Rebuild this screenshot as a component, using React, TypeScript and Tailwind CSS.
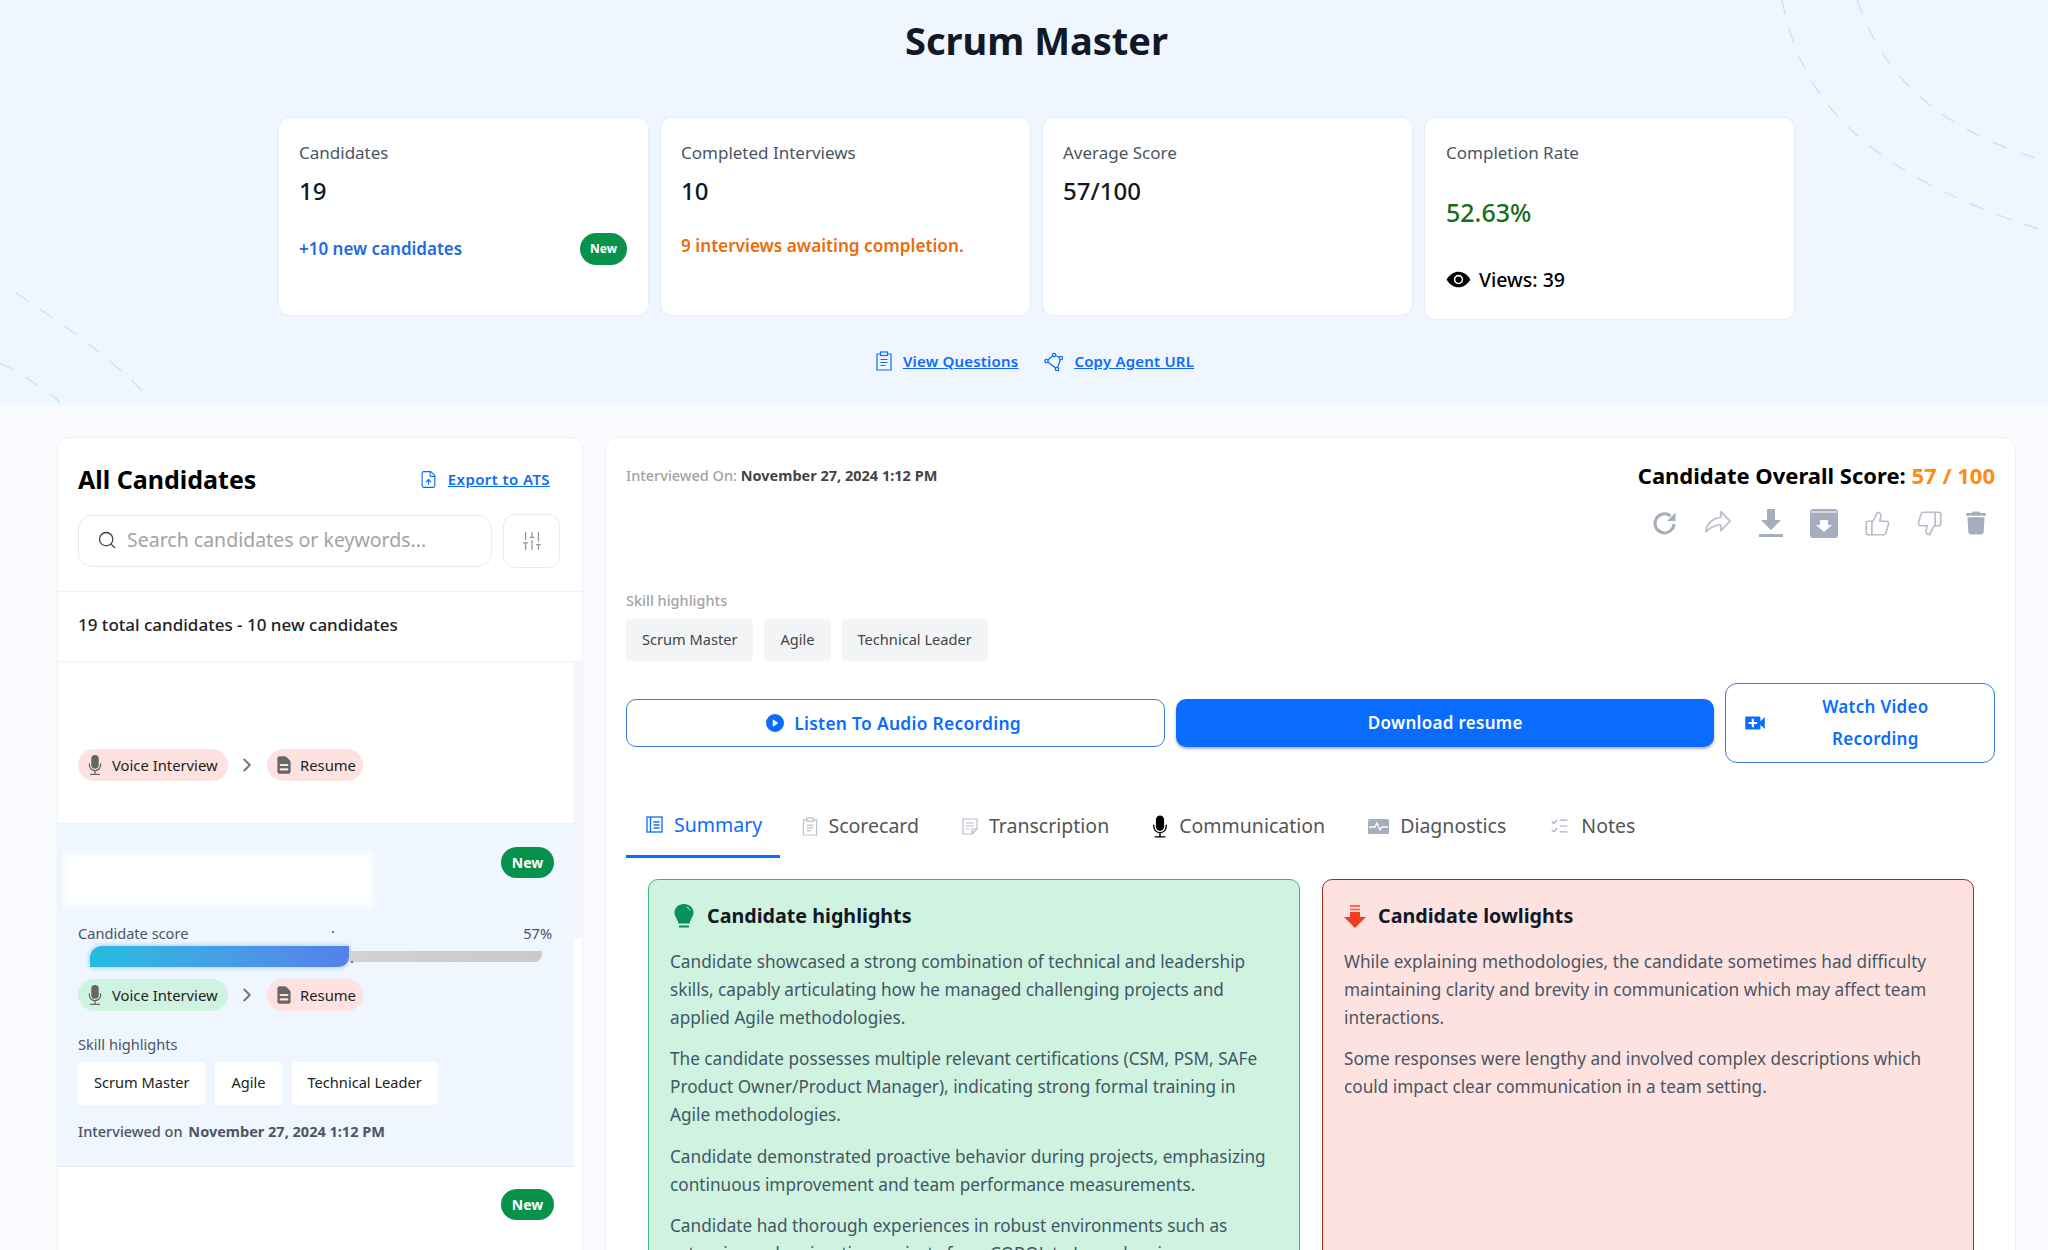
import { ChevronRight, FileUp, ListChecks, Search, SlidersVertical, ThumbsDown, ThumbsUp } from 'lucide-react';
import { BsMicFill, BsPlayCircleFill } from 'react-icons/bs';
import { FaTrash } from 'react-icons/fa';
import { HiDocumentText } from 'react-icons/hi';
import { IoEye } from 'react-icons/io5';
import { MdVideoCall } from 'react-icons/md';
import { PiShareFat } from 'react-icons/pi';

const stats = [
	{ label: 'Candidates', value: '19' },
	{ label: 'Completed Interviews', value: '10' },
	{ label: 'Average Score', value: '57/100' },
];

const skills = ['Scrum Master', 'Agile', 'Technical Leader'];

function NewBadge({ small }: { small?: boolean }) {
	return (
		<span
			className={
				small
					? 'flex h-[32px] w-[47px] items-center justify-center rounded-full bg-[#06924a] text-[12px] font-bold text-white'
					: 'flex h-[31px] w-[53px] items-center justify-center rounded-full bg-[#06924a] text-[14px] font-bold text-white'
			}
		>
			New
		</span>
	);
}

function Pills({ voice }: { voice: string }) {
	return (
		<div className="flex items-center text-[14.800px] text-[#222]">
			<span className={`flex h-[32px] w-[150px] items-center gap-[7px] rounded-full pl-[7px] ${voice}`}>
				<BsMicFill className="h-[20px] w-[20px] text-[#666]" />
				Voice Interview
			</span>
			<ChevronRight className="ml-[8px] mr-[9px] h-[22px] w-[22px] text-[#777]" strokeWidth={2.2} />
			<span className="flex h-[32px] w-[96px] items-center gap-[5px] rounded-full bg-[#fee2df] pl-[6px]">
				<HiDocumentText className="h-[22px] w-[22px] text-[#666]" />
				Resume
			</span>
		</div>
	);
}

function RefreshIcon() {
	return (
		<svg width="26" height="26" viewBox="0 0 26 26" fill="none">
			<path d="M22 14a9.500 9.500 0 1 1-3.500-8" stroke="#a6adbf" strokeWidth="3" />
			<path d="M23.500 2.500V11H15z" fill="#a6adbf" />
		</svg>
	);
}

function DownloadIcon() {
	return (
		<svg width="26" height="30" viewBox="0 0 26 30" fill="#a6adbf">
			<path d="M9 1h8v11h6L13 22 3 12h6z" />
			<rect x="1" y="26" width="24" height="3" />
		</svg>
	);
}

function ArchiveIcon() {
	return (
		<svg width="30" height="30" viewBox="0 0 30 30">
			<path d="M4 1h22a3 3 0 0 1 3 3v23a3 3 0 0 1-3 3H4a3 3 0 0 1-3-3V4a3 3 0 0 1 3-3z" fill="#a6adbf" />
			<path d="M2 4h26" stroke="#fff" strokeWidth="1" />
			<path d="M11 12h8v5h4l-8 7-8-7h4z" fill="#fff" />
		</svg>
	);
}

function ClipboardIcon({ className }: { className: string }) {
	return (
		<svg className={className} viewBox="0 0 16 20" fill="none" stroke="currentColor" strokeWidth="1.2">
			<path d="M4.500 3H1v16h14V3h-3.500" />
			<rect x="4.500" y="1" width="7" height="3.500" />
			<path d="M4.500 8.500h7M4.500 11.500h7M4.500 14.500h5" />
		</svg>
	);
}

function NoteIcon() {
	return (
		<svg width="16" height="17" viewBox="0 0 16 17" fill="none" stroke="#b9bdc9" strokeWidth="1.2">
			<path d="M1 1h14v10l-5 5H1z" />
			<path d="M15 11h-5v5M4 5h8M4 8h8M4 11h3.500" />
		</svg>
	);
}

function SummaryIcon() {
	return (
		<svg width="17" height="17" viewBox="0 0 17 17" fill="none" stroke="#0a6cff" strokeWidth="1.3">
			<rect x="1" y="1" width="15" height="15" />
			<path d="M4.500 1v15M7.500 6h6M7.500 9h6M7.500 12h6" />
		</svg>
	);
}

function DiagnosticsIcon() {
	return (
		<svg width="21" height="17" viewBox="0 0 21 17">
			<rect y="1" width="21" height="15" rx="1.500" fill="#a6adbf" />
			<path d="M1 9h6l2-4 3 7 2-3h6" fill="none" stroke="#fff" strokeWidth="1.3" />
		</svg>
	);
}

function BulbIcon() {
	return (
		<svg width="20" height="24" viewBox="0 0 20 24" fill="#0b8f5a">
			<path d="M10 0c5.500 0 9.500 3.700 9.500 8.500 0 4-3 6-4 11h-11c-1-5-4-7-4-11C.5 3.700 4.500 0 10 0z" />
			<path d="M13 3c1.500.8 2.500 2 3 3.500" fill="none" stroke="#cff3e0" strokeWidth="1" />
			<rect x="5" y="21.500" width="10" height="2" />
		</svg>
	);
}

function DownArrowIcon() {
	return (
		<svg width="22" height="23" viewBox="0 0 22 23" fill="#ee3f22">
			<rect x="6" y="0" width="10" height="2" fill="#f0705a" />
			<rect x="6" y="3.500" width="10" height="2" fill="#f0705a" />
			<path d="M6 7h10v5h6L11 23 0 12h6z" />
		</svg>
	);
}

function AgentIcon() {
	return (
		<svg width="20" height="20" viewBox="0 0 20 20" fill="none" stroke="#0a6cff" strokeWidth="1.2">
			<path d="M2.500 10 10 4l7 3-4 11z" />
			<circle cx="2.500" cy="10" r="1.700" fill="#eff6ff" />
			<circle cx="10" cy="4" r="1.700" fill="#eff6ff" />
			<circle cx="17" cy="7" r="1.700" fill="#eff6ff" />
			<circle cx="13" cy="18" r="1.700" fill="#eff6ff" />
		</svg>
	);
}

function ScoreBar() {
	return (
		<div className="relative ml-[12px] mt-[1px] flex h-[21px] items-center">
			<div className="h-[21px] w-[259px] rounded-tl-[12px] rounded-br-[10px] bg-gradient-to-r from-[#22bde0] to-[#5580ea] shadow-[0_0_5px_rgba(60,170,240,0.6)]" />
			<div className="h-[11px] w-[193px] rounded-br-[8px] bg-gradient-to-r from-[#d2d2d2] to-[#c9c9c9]" />
			<span className="absolute left-[242px] top-[-15px] h-[2px] w-[2px] bg-[#5a74e0]" />
			<span className="absolute left-[261px] top-[15px] h-[2px] w-[2px] bg-[#5a74e0]" />
		</div>
	);
}

function CandidatesPanel() {
	return (
		<section className="h-[860px] w-[526px] shrink-0 rounded-t-[12px] border border-[#edf0f5] bg-white">
			<div className="flex items-center justify-between pl-[20px] pr-[32px] pt-[21px]">
				<h2 className="text-[25px] font-bold leading-[40px] text-black">All Candidates</h2>
				<a className="flex items-center gap-[10px] text-[15px] font-semibold tracking-[0.4px] text-[#0a6cff] underline">
					<FileUp className="h-[19px] w-[19px]" strokeWidth={1.4} />
					Export to ATS
				</a>
			</div>
			<div className="mt-[15px] flex items-center gap-[11px] px-[20px]">
				<div className="flex h-[52px] w-[414px] items-center gap-[10px] rounded-[14px] border border-[#e8eaee] pb-[2px] pl-[18px] text-[19.500px] text-[#a3a3a3]">
					<Search className="h-[20px] w-[20px] text-[#444]" strokeWidth={1.6} />
					Search candidates or keywords...
				</div>
				<div className="flex h-[54px] w-[57px] items-center justify-center rounded-[12px] border border-[#e8eaee]">
					<SlidersVertical className="h-[22px] w-[22px] text-[#999]" strokeWidth={1.5} />
				</div>
			</div>
			<div className="mt-[23px] flex h-[71px] items-center border-y border-[#eef0f4] pb-[4px] pl-[20px] text-[17px] font-medium text-[#222]">
				19 total candidates - 10 new candidates
			</div>
			<div className="flex">
				<div className="w-[517px]">
					<div className="h-[162px] border-b border-[#eef0f4] pl-[20px] pt-[87px]">
						<Pills voice="bg-[#fee2df]" />
					</div>
					<div className="relative h-[343px] border-b border-[#e8edf5] bg-[#eff6ff] pl-[20px] pt-[99px]">
						<div className="absolute left-[6px] top-[29px] h-[54px] w-[309px] bg-white blur-[3px]" />
						<div className="absolute left-[443px] top-[23px]">
							<NewBadge />
						</div>
						<div className="flex items-end justify-between pr-[22px] text-[14.600px] text-[#4b5563]">
							<span className="-mt-[2px]">Candidate score</span>
							<span>57%</span>
						</div>
						<ScoreBar />
						<div className="mt-[12px]">
							<Pills voice="bg-[#d0f2e0]" />
						</div>
						<p className="mt-[21px] text-[14.600px] leading-[24px] text-[#4b5563]">Skill highlights</p>
						<div className="mt-[6px] flex gap-[10px]">
							{skills.map((s) => (
								<span key={s} className="flex h-[43px] items-center rounded-[4px] bg-white px-[16px] text-[14.600px] text-[#222]">
									{s}
								</span>
							))}
						</div>
						<p className="mt-[16px] text-[14.500px] font-medium text-[#4b5563]">
							Interviewed on <span className="ml-[2px] font-bold">November 27, 2024 1:12 PM</span>
						</p>
					</div>
					<div className="flex justify-end pr-[20px] pt-[22px]">
						<NewBadge />
					</div>
				</div>
				<div className="w-[8px]">
					<div className="h-[276px] bg-[#f4f5fa]" />
				</div>
			</div>
		</section>
	);
}

function DetailPanel() {
	const tabs = [
		{ name: 'Scorecard', icon: <ClipboardIcon className="h-[19px] w-[16px] text-[#b9bdc9]" /> },
		{ name: 'Transcription', icon: <NoteIcon /> },
		{ name: 'Communication', icon: <BsMicFill className="-mx-[3px] h-[25px] w-[22px] text-black" /> },
		{ name: 'Diagnostics', icon: <DiagnosticsIcon /> },
		{ name: 'Notes', icon: <ListChecks className="h-[20px] w-[21px] text-[#a6adbf]" strokeWidth={1.4} /> },
	];
	return (
		<section className="h-[860px] w-[1411px] shrink-0 rounded-t-[12px] border border-[#edf0f5] bg-white px-[20px]">
			<div className="flex justify-between pt-[20px]">
				<p className="pt-[7px] text-[14.500px] font-medium text-[#a3a3a3]">
					Interviewed On: <span className="font-bold text-[#444]">November 27, 2024 1:12 PM</span>
				</p>
				<div className="flex flex-col items-end">
					<p className="text-[22px] font-bold leading-[34px] text-black">
						Candidate Overall Score: <span className="text-[#fb8c14]">57 / 100</span>
					</p>
					<div className="mr-[9px] mt-[16px] flex h-[30px] items-center gap-[25px] text-[#a6adbf]">
						<RefreshIcon />
						<PiShareFat className="h-[30px] w-[30px] text-[#bdc2cf]" />
						<DownloadIcon />
						<ArchiveIcon />
						<ThumbsUp className="h-[27px] w-[27px] text-[#b9bdc9]" strokeWidth={1.5} />
						<ThumbsDown className="h-[27px] w-[27px] text-[#b9bdc9]" strokeWidth={1.5} />
						<FaTrash className="-ml-[2px] h-[24px] w-[20px]" />
					</div>
				</div>
			</div>
			<p className="mt-[50px] text-[14.500px] font-medium leading-[24px] text-[#a3a3a3]">Skill highlights</p>
			<div className="mt-[7px] flex gap-[11px]">
				{skills.map((s) => (
					<span key={s} className="flex h-[42px] items-center rounded-[4px] bg-[#f3f4f6] px-[16px] text-[14.600px] text-[#444]">
						{s}
					</span>
				))}
			</div>
			<div className="mt-[22px] flex items-center gap-[11px]">
				<button className="flex h-[48px] w-[540px] items-center justify-center gap-[10px] rounded-[10px] border-[1.5px] border-[#3b7dd8] pr-[4px] text-[17.400px] font-semibold tracking-[0.3px] text-[#0a6cff]">
					<BsPlayCircleFill className="h-[18px] w-[18px]" />
					Listen To Audio Recording
				</button>
				<button className="h-[48px] w-[539px] rounded-[10px] bg-[#0a6cff] text-[17px] font-semibold tracking-[0.3px] text-white shadow-[0_2px_3px_rgba(0,0,0,0.3)]">
					Download resume
				</button>
				<button className="flex h-[80px] w-[270px] items-center rounded-[12px] border-[1.5px] border-[#3b7dd8] pl-[16px] text-[17px] font-semibold leading-[32px] tracking-[0.3px] text-[#0a6cff]">
					<MdVideoCall className="h-[26px] w-[26px]" />
					<span className="ml-[22px] w-[170px] text-center">Watch Video Recording</span>
				</button>
			</div>
			<div className="mt-[27px] flex h-[68px] items-center text-[19.500px] text-[#555]">
				<div className="flex h-full w-[154px] items-center gap-[11px] border-b-[3px] border-[#0a6cff] pl-[20px] pt-[4px] text-[#0a6cff]">
					<SummaryIcon />
					Summary
				</div>
				{tabs.map((t) => (
					<div key={t.name} className="ml-[21.500px] mr-[21.500px] flex items-center gap-[11px] pt-[4px]">
						{t.icon}
						{t.name}
					</div>
				))}
			</div>
			<div className="mt-[21px] flex gap-[22px] pl-[22px]">
				<div className="h-[400px] w-[652px] rounded-[10px] border border-[#3eb27c] bg-[#cff3e0] px-[21px] pt-[20px] text-[17.200px] leading-[27.800px] text-[#3f5765]">
					<div className="mb-[16px] flex items-center gap-[13px] pl-[4px] text-[19.700px] font-bold leading-[32px] text-[#111827]">
						<BulbIcon />
						Candidate highlights
					</div>
					<p className="mb-[14px]">
						Candidate showcased a strong combination of technical and leadership skills, capably articulating how he managed challenging projects and applied Agile methodologies.
					</p>
					<p className="mb-[14px]">
						The candidate possesses multiple relevant certifications (CSM, PSM, SAFe Product Owner/Product Manager), indicating strong formal training in Agile methodologies.
					</p>
					<p className="mb-[14px]">
						Candidate demonstrated proactive behavior during projects, emphasizing continuous improvement and team performance measurements.
					</p>
					<p>Candidate had thorough experiences in robust environments such as extensive code migration projects from COBOL to Java, showing</p>
				</div>
				<div className="h-[400px] w-[652px] rounded-[10px] border border-[#a8281c] bg-[#fee2e0] px-[21px] pt-[20px] text-[17.200px] leading-[27.800px] text-[#4b5563]">
					<div className="mb-[16px] flex items-center gap-[12px] text-[19.700px] font-bold leading-[32px] text-[#111827]">
						<DownArrowIcon />
						Candidate lowlights
					</div>
					<p className="mb-[14px]">
						While explaining methodologies, the candidate sometimes had difficulty maintaining clarity and brevity in communication which may affect team interactions.
					</p>
					<p>Some responses were lengthy and involved complex descriptions which could impact clear communication in a team setting.</p>
				</div>
			</div>
		</section>
	);
}

export default function App() {
	return (
		<div className="h-[1250px] overflow-hidden bg-[#fafbfe] font-['Noto_Sans',sans-serif]">
			<header className="relative flex h-[405px] flex-col items-center bg-[#eff6ff] pl-[25px]">
				<svg className="absolute inset-0 h-full w-full" fill="none" stroke="#c4e0f9" strokeWidth="1.2" strokeDasharray="15 14">
					<path d="M1782 0C1800 90 1850 170 2048 232" />
					<path d="M1857 0C1885 80 1940 130 2048 162" />
					<path d="M16 293C80 335 125 370 150 400" />
					<path d="M0 363C25 375 45 390 60 402" />
				</svg>
				<h1 className="relative mt-[17px] text-[38px] font-bold leading-[46px] text-[#111827]">Scrum Master</h1>
				<div className="relative mt-[55px] flex items-start gap-[13px]">
					{stats.map((s, i) => (
						<div key={s.label} className="relative h-[197px] w-[369px] rounded-[10px] bg-white pl-[20px] pt-[22px] shadow-[0_0_2px_rgba(30,60,120,0.15)]">
							<p className="text-[17px] leading-[26px] text-[#4b5563]">{s.label}</p>
							<p className="mt-[9px] text-[24px] font-medium leading-[32px] text-[#111827]">{s.value}</p>
							{i === 0 && (
								<div className="mt-[26px] flex items-center justify-between pr-[21px]">
									<span className="text-[17px] font-semibold text-[#1d6ae5]">+10 new candidates</span>
									<NewBadge small />
								</div>
							)}
							{i === 1 && <p className="mt-[26px] text-[17.200px] font-semibold text-[#ea6c0a]">9 interviews awaiting completion.</p>}
						</div>
					))}
					<div className="h-[201px] w-[369px] rounded-[10px] bg-white pl-[21px] pt-[22px] shadow-[0_0_2px_rgba(30,60,120,0.15)]">
						<p className="text-[17px] leading-[26px] text-[#4b5563]">Completion Rate</p>
						<p className="mt-[29px] text-[25px] font-medium leading-[34px] text-[#166f16]">52.63%</p>
						<p className="mt-[36px] flex items-center gap-[8px] text-[19.500px] font-medium text-black">
							<IoEye className="h-[25px] w-[25px]" />
							Views: 39
						</p>
					</div>
				</div>
				<div className="relative mt-[31px] flex items-center gap-[26px] pr-[3px] text-[15px] font-semibold tracking-[0.2px] text-[#0a6cff] underline">
					<a className="flex items-center gap-[11px]">
						<ClipboardIcon className="h-[20px] w-[16px]" />
						View Questions
					</a>
					<a className="flex items-center gap-[10px]">
						<AgentIcon />
						Copy Agent URL
					</a>
				</div>
			</header>
			<main className="flex gap-[22px] pl-[57px] pt-[32px]">
				<CandidatesPanel />
				<DetailPanel />
			</main>
		</div>
	);
}
